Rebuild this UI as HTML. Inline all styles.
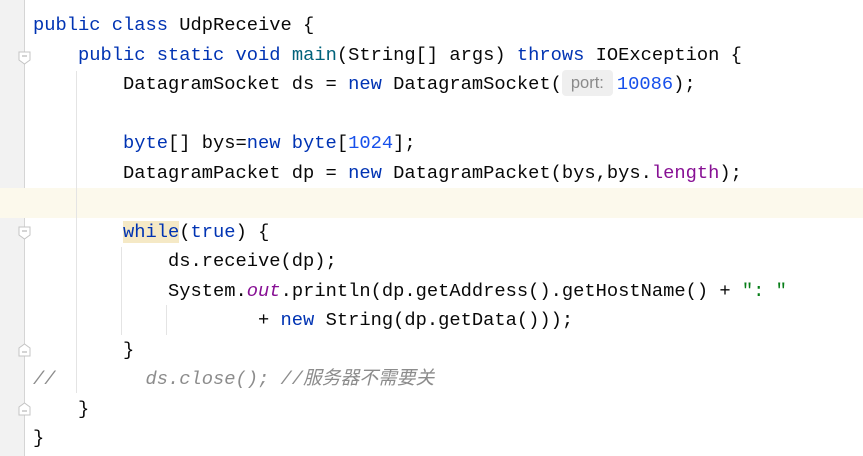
<!DOCTYPE html>
<html><head><meta charset="utf-8"><style>
html,body{margin:0;padding:0;}
body{width:863px;height:456px;background:#fff;position:relative;overflow:hidden;font-family:"Liberation Mono","Noto Sans CJK SC",monospace;font-size:18.75px;color:#080808;}
.gut{position:absolute;left:0;top:0;width:24px;height:456px;background:#f2f2f2;border-right:1px solid #d5d5d5;}
.hl{position:absolute;left:0;top:188px;width:863px;height:29.5px;background:#fcf9ec;}
.l{position:absolute;left:33px;height:29.5px;line-height:29.5px;white-space:pre;}
.k{color:#0033b3}.f{color:#00627a}.n{color:#1750eb}.p{color:#871094}.s{color:#067d17}
.c{color:#8c8c8c;font-style:italic}
.o{color:#871094;font-style:italic}
.g{position:absolute;width:1px;background:#e4e4e4;}
.w{background:#f5e9c6;}
.hint{display:inline-block;box-sizing:border-box;width:51px;text-align:center;background:#efefef;color:#8a8a8a;font-family:"Liberation Sans",sans-serif;font-size:16.5px;line-height:26px;height:26px;border-radius:4px;vertical-align:1px;margin-right:4px;}
.fm{position:absolute;left:18px;width:13px;height:14px;}
</style></head><body>
<div class="gut"></div>
<div class="hl"></div>
<div class="g" style="left:76px;top:71px;height:322px"></div>
<div class="g" style="left:121px;top:247px;height:88px"></div>
<div class="g" style="left:166px;top:305px;height:30px"></div>
<svg class="fm" style="top:51px" viewBox="0 0 13 14"><path d="M1 1H12V9L6.5 13L1 9Z" fill="#fff" stroke="#c4c4c4"/><path d="M4 5H9" stroke="#aaa"/></svg>
<svg class="fm" style="top:226px" viewBox="0 0 13 14"><path d="M1 1H12V9L6.5 13L1 9Z" fill="#fff" stroke="#c4c4c4"/><path d="M4 5H9" stroke="#aaa"/></svg>
<svg class="fm" style="top:343px" viewBox="0 0 13 14"><path d="M1 13H12V5L6.5 1L1 5Z" fill="#fff" stroke="#c4c4c4"/><path d="M4 9H9" stroke="#aaa"/></svg>
<svg class="fm" style="top:402px" viewBox="0 0 13 14"><path d="M1 13H12V5L6.5 1L1 5Z" fill="#fff" stroke="#c4c4c4"/><path d="M4 9H9" stroke="#aaa"/></svg>
<div class="l" style="top:11px"><span class="k">public class</span> UdpReceive {</div>
<div class="l" style="top:40.5px">    <span class="k">public static void</span> <span class="f">main</span>(String[] args) <span class="k">throws</span> IOException {</div>
<div class="l" style="top:70px">        DatagramSocket ds = <span class="k">new</span> DatagramSocket(<span class="hint">port:</span><span class="n">10086</span>);</div>
<div class="l" style="top:129px">        <span class="k">byte</span>[] bys=<span class="k">new byte</span>[<span class="n">1024</span>];</div>
<div class="l" style="top:158.5px">        DatagramPacket dp = <span class="k">new</span> DatagramPacket(bys,bys.<span class="p">length</span>);</div>
<div class="l" style="top:217.5px">        <span class="k w">while</span>(<span class="k">true</span>) {</div>
<div class="l" style="top:247px">            ds.receive(dp);</div>
<div class="l" style="top:276.5px">            System.<span class="o">out</span>.println(dp.getAddress().getHostName() + <span class="s">": "</span></div>
<div class="l" style="top:306px">                    + <span class="k">new</span> String(dp.getData()));</div>
<div class="l" style="top:335.5px">        }</div>
<div class="l c" style="top:365px">//        ds.close(); //服务器不需要关</div>
<div class="l" style="top:394.5px">    }</div>
<div class="l" style="top:424px">}</div>
</body></html>
